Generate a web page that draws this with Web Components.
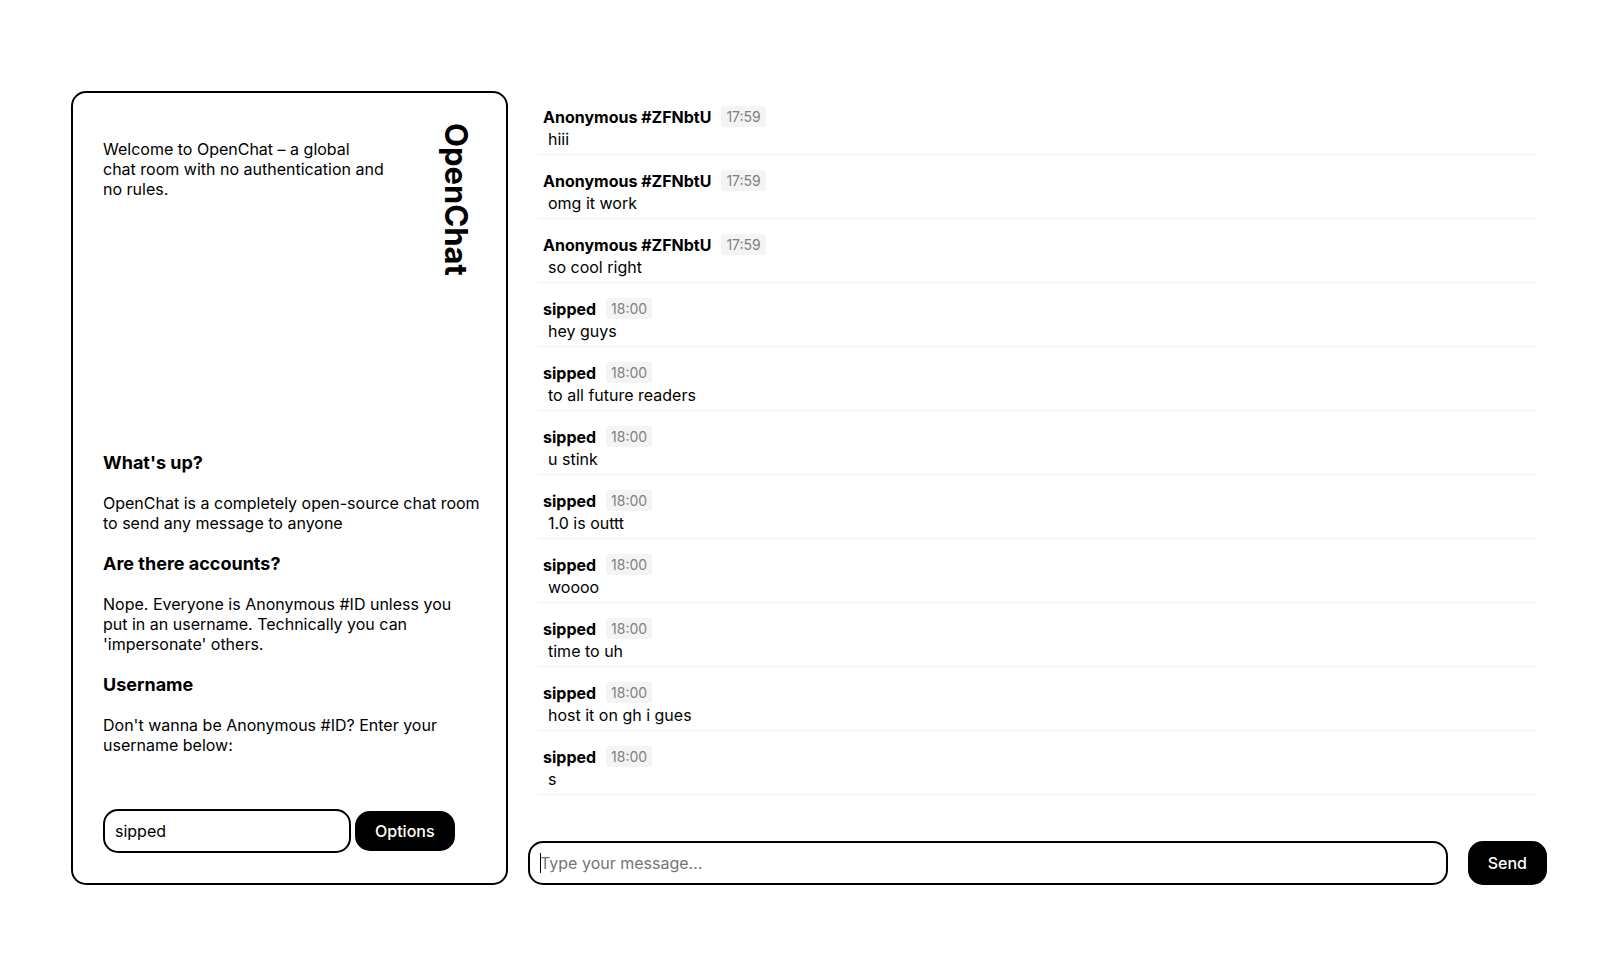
<!DOCTYPE html>
<html lang="en">
<head>
<meta charset="utf-8">
<title>OpenChat</title>
<style>
  body { margin: 0; background: #fff; color: #000; font: 16px/20px Inter, sans-serif; }
</style>
</head>
<body>
<open-chat>
  <chat-sidebar slot="side">
    <info-block heading="What's up?">OpenChat is a completely open-source chat room to send any message to anyone</info-block>
    <info-block heading="Are there accounts?">Nope. Everyone is Anonymous #ID unless you put in an username. Technically you can 'impersonate' others.</info-block>
    <info-block heading="Username">Don't wanna be Anonymous #ID? Enter your username below:</info-block>
  </chat-sidebar>
  <chat-message author="Anonymous #ZFNbtU" time="17:59">hiii</chat-message>
  <chat-message author="Anonymous #ZFNbtU" time="17:59">omg it work</chat-message>
  <chat-message author="Anonymous #ZFNbtU" time="17:59">so cool right</chat-message>
  <chat-message author="sipped" time="18:00">hey guys</chat-message>
  <chat-message author="sipped" time="18:00">to all future readers</chat-message>
  <chat-message author="sipped" time="18:00">u stink</chat-message>
  <chat-message author="sipped" time="18:00">1.0 is outtt</chat-message>
  <chat-message author="sipped" time="18:00">woooo</chat-message>
  <chat-message author="sipped" time="18:00">time to uh</chat-message>
  <chat-message author="sipped" time="18:00">host it on gh i gues</chat-message>
  <chat-message author="sipped" time="18:00">s</chat-message>
  <message-composer slot="composer"></message-composer>
</open-chat>
<script>
  const controls = `
    *, :host { box-sizing: border-box; }
    input { min-width: 0; height: 44px; margin: 0; padding: 0 10px; border: 2px solid #000;
      border-radius: 15px; background: #fff; color: #000; font: inherit; outline: none; }
    input::placeholder { color: #757575; }
    button { height: 40px; margin: 0; padding: 0 20px; border: 0; border-radius: 15px;
      background: #000; color: #fff; font: inherit; font-weight: 500; cursor: pointer; }
  `;
  const define = (name, render) => customElements.define(name, class extends HTMLElement {
    constructor() {
      super();
      this.attachShadow({ mode: 'open' }).innerHTML = render(this);
    }
  });

  define('open-chat', () => `
    <style>
      :host { box-sizing: border-box; display: grid; grid-template-columns: 437px minmax(0, 1fr);
        column-gap: 20px; min-height: 100vh; padding: 91px 68px 94px 71px; }
      main { display: flex; flex-direction: column; gap: 20px; }
      .list { flex: 1; padding: 0 10px; }
    </style>
    <slot name="side"></slot>
    <main>
      <div class="list"><slot></slot></div>
      <slot name="composer"></slot>
    </main>`);

  define('chat-sidebar', () => `
    <style>${controls}
      :host { display: flex; flex-direction: column; justify-content: space-between;
        padding: 30px 26px 30px 30px; border: 2px solid #000; border-radius: 15px; }
      header { display: flex; justify-content: space-between; align-items: flex-start; }
      header p { margin: 16px 0 0; max-width: 282px; }
      h1 { margin: 0 4px 0 0; font-size: 31px; line-height: 39px; font-weight: 700; writing-mode: vertical-rl; }
      form { display: flex; align-items: center; gap: 4px; margin-top: 54px; }
      input { width: 248px; }
    </style>
    <header>
      <p>Welcome to OpenChat – a global chat room with no authentication and no rules.</p>
      <h1>OpenChat</h1>
    </header>
    <section>
      <slot></slot>
      <form onsubmit="return false">
        <input type="text" value="sipped" aria-label="Username">
        <button type="button">Options</button>
      </form>
    </section>`);

  define('info-block', el => `
    <style>
      :host { display: block; }
      h3 { margin: 19px 0; font-size: 18px; line-height: 23px; font-weight: 700; }
      p { margin: 0; }
    </style>
    <h3>${el.getAttribute('heading')}</h3>
    <p><slot></slot></p>`);

  define('chat-message', el => `
    <style>
      :host { display: block; padding: 15px 5px 5px; border-bottom: 1px solid #eee; }
      header { display: flex; align-items: center; gap: 10px; margin-bottom: 2px; }
      b { font-weight: 700; }
      time { padding: 2px 5px; border-radius: 3px; background: #f4f4f4; color: #808080;
        font-size: 14px; line-height: 17px; }
      p { margin: 0; padding-left: 5px; }
    </style>
    <header><b>${el.getAttribute('author')}</b><time>${el.getAttribute('time')}</time></header>
    <p><slot></slot></p>`);

  define('message-composer', () => `
    <style>${controls}
      :host { display: block; }
      form { display: flex; gap: 20px; }
      .field { position: relative; display: flex; flex: 1; }
      .field::after { content: ""; position: absolute; left: 12px; top: 12px; width: 1px; height: 20px; background: #000; }
      input { flex: 1; }
      button { height: 44px; }
    </style>
    <form onsubmit="return false">
      <div class="field"><input type="text" placeholder="Type your message..." aria-label="Message"></div>
      <button type="submit">Send</button>
    </form>`);
</script>
</body>
</html>
